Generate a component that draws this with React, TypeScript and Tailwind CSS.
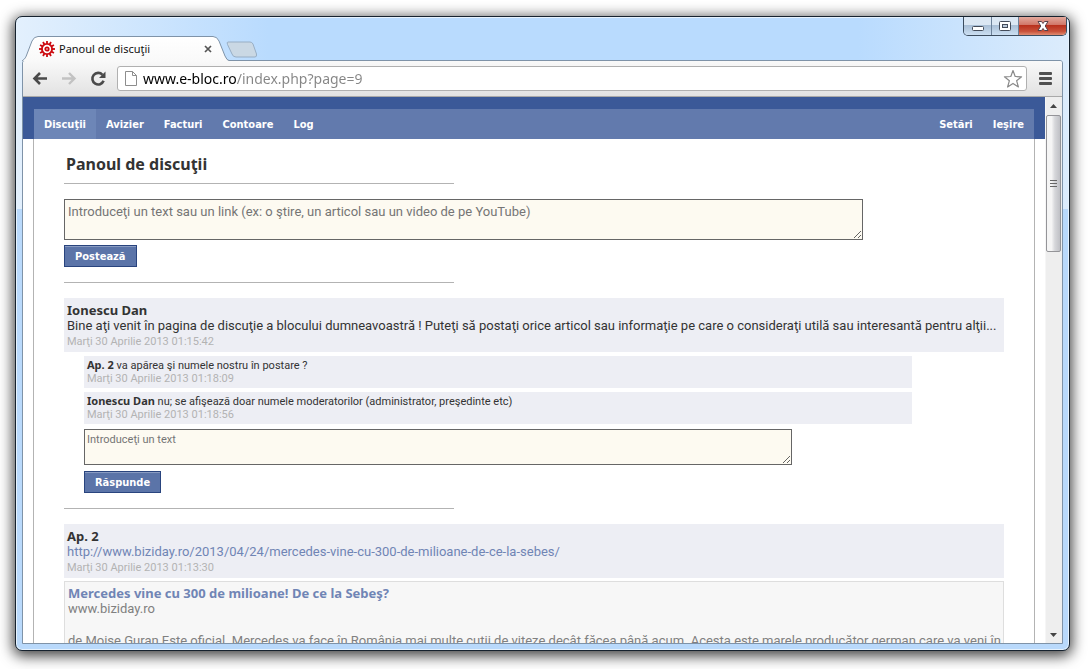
import type { ReactNode } from "react";

const navLinks = ["Discuţii", "Avizier", "Facturi", "Contoare", "Log"];
const accountLinks = ["Setări", "Ieşire"];

const replies = [
  {
    author: "Ap. 2",
    text: "va apărea şi numele nostru în postare ?",
    date: "Marţi 30 Aprilie 2013 01:18:09",
  },
  {
    author: "Ionescu Dan",
    text: "nu; se afişează doar numele moderatorilor (administrator, preşedinte etc)",
    date: "Marţi 30 Aprilie 2013 01:18:56",
  },
];

function GearIcon() {
  const teeth = Array.from({ length: 12 }, (_, i) => i * 30);
  return (
    <svg viewBox="0 0 16 16" className="w-4 h-4 shrink-0">
      {teeth.map((angle) => (
        <rect
          key={angle}
          x="7.1"
          y="0"
          width="1.8"
          height="3"
          fill="#cc0a10"
          transform={`rotate(${angle} 8 8)`}
        />
      ))}
      <circle cx="8" cy="8" r="5.1" fill="#fff" stroke="#cc0a10" strokeWidth="1.900" />
      <circle cx="8" cy="8" r="1.700" fill="#fff" stroke="#cc0a10" strokeWidth="1.800" />
    </svg>
  );
}

function TitleBar() {
  return (
    <header className="relative flex h-[43px] shrink-0 justify-between pl-[6px] pr-[2px]">
      <div className="flex items-end">
        <div className="relative z-10 -mb-px flex h-[25px] w-[207px] items-center pl-[17px] pr-[17px]">
          <svg viewBox="0 0 207 25" className="absolute left-0 top-0 w-[207px] h-[25px]">
            <defs>
              <linearGradient id="tab" x1="0" y1="0" x2="0" y2="1">
                <stop offset="0" stopColor="#ffffff" />
                <stop offset="1" stopColor="#f9f9f9" />
              </linearGradient>
            </defs>
            <path
              d="M0 25 C3 23 4 21 5 18 L10 5 Q12 .5 16 .5 H191 Q195 .5 197 5 L203 20 Q205 24.5 207 24.5 V25 Z"
              fill="url(#tab)"
            />
            <path
              d="M0 25 C3 23 4 21 5 18 L10 5 Q12 .5 16 .5 H191 Q195 .5 197 5 L203 20 Q205 24.5 207 24.5"
              fill="none"
              stroke="#7f93a8"
            />
          </svg>
          <div className="relative flex flex-1 items-center gap-1">
            <GearIcon />
            <span className="flex-1 font-['Noto_Sans',sans-serif] text-[11px] leading-4 text-[#111]">
              Panoul de discuţii
            </span>
            <button aria-label="Închide fila" className="w-2 h-4 flex items-center">
              <svg viewBox="0 0 8 8" className="w-2 h-2">
                <path d="M1 1 7 7M7 1 1 7" stroke="#555" strokeWidth="1.7" />
              </svg>
            </button>
          </div>
        </div>
        <button aria-label="Filă nouă" className="mb-[2px] -ml-[4px]">
          <svg viewBox="0 0 34 17" className="w-[34px] h-[17px]">
            <path
              d="M3 1 H25 Q27 1 28 3 L31.500 13 Q32 16 30 16 H11 Q8 16 7 13 L2.500 3.500 Q1.500 1 3 1Z"
              fill="#cad8e4"
              stroke="#98aec4"
            />
          </svg>
        </button>
      </div>

      <div className="flex h-[19px] w-[104px] overflow-hidden rounded-b-[5px] border border-t-0 border-[#3c4c5e]">
        <button
          aria-label="Minimizează"
          className="flex w-[28px] items-center justify-center border-r border-[#6c8199] bg-[linear-gradient(#dbe7f3_0_45%,#a9bfd6_46%,#cbdff2)]"
        >
          <svg viewBox="0 0 14 14" className="w-[14px] h-[14px]">
            <rect x="1.500" y="7.500" width="11" height="4" rx="1" fill="#fff" stroke="#444c5a" />
          </svg>
        </button>
        <button
          aria-label="Maximizează"
          className="flex w-[27px] items-center justify-center border-r border-[#6c8199] bg-[linear-gradient(#dbe7f3_0_45%,#a9bfd6_46%,#cbdff2)]"
        >
          <svg viewBox="0 0 14 14" className="w-[14px] h-[14px]">
            <rect x="1.500" y="2.500" width="11" height="9" rx="1" fill="#fff" stroke="#444c5a" />
            <rect x="4.500" y="5.500" width="5" height="3" fill="#bccbdc" stroke="#444c5a" />
          </svg>
        </button>
        <button
          aria-label="Închide"
          className="flex flex-1 items-center justify-center bg-[linear-gradient(#e3a99d_0,#d07566_45%,#b8301c_46%,#c9523b_80%,#e08d72)]"
        >
          <svg viewBox="0 0 14 14" className="w-[14px] h-[14px]">
            <path
              d="M2 2.500H5.500L7 4.500 8.500 2.500H12L9.200 7 12 11.500H8.500L7 9.500 5.500 11.500H2L4.800 7Z"
              fill="#fff"
              stroke="#55414a"
            />
          </svg>
        </button>
      </div>
    </header>
  );
}

function Toolbar() {
  return (
    <div className="flex h-[36px] shrink-0 items-center border-b border-[#a9a9a9] bg-[linear-gradient(#f9f9f9,#e2e2e2)] pl-[9px] pr-[10px]">
      <button aria-label="Înapoi" className="mr-[13px]">
        <svg viewBox="0 0 16 16" className="w-4 h-4">
          <path d="M15 7.500H3M8 2 2.500 7.500 8 13" fill="none" stroke="#4a4a4a" strokeWidth="2.600" />
        </svg>
      </button>
      <button aria-label="Înainte" className="mr-[13px]">
        <svg viewBox="0 0 16 16" className="w-4 h-4">
          <path d="M1 7.500H13M8 2 13.500 7.500 8 13" fill="none" stroke="#c2c2c2" strokeWidth="2.400" />
        </svg>
      </button>
      <button aria-label="Reîncarcă" className="mr-[11px]">
        <svg viewBox="0 0 16 16" className="w-4 h-4">
          <path d="M12.500 3.800A5.800 5.800 0 1 0 13.600 9.800" fill="none" stroke="#4a4a4a" strokeWidth="2.600" />
          <path d="M15.500 .5V7H9Z" fill="#4a4a4a" />
        </svg>
      </button>
      <div className="flex h-[25px] flex-1 items-center rounded-[3px] border border-[#b0b0b0] bg-white pl-[7px] pr-[3px]">
        <svg viewBox="0 0 12 15" className="mr-[6px] w-3 h-[15px] shrink-0">
          <path d="M.5 .5H7.500L11.500 4.500V14.500H.5ZM7.500 .5V4.500H11.500" fill="#fff" stroke="#8d8d8d" />
        </svg>
        {/* host name in black, the path in grey */}
        <input
          aria-label="Adresă"
          defaultValue="www.e-bloc.ro/index.php?page=9"
          className="h-[23px] min-w-0 flex-1 bg-[linear-gradient(90deg,#000_94px,#858585_94px)] bg-clip-text font-['Noto_Sans',sans-serif] text-[14px] text-transparent outline-none"
        />
        <button aria-label="Adaugă la favorite">
          <svg viewBox="0 0 20 20" className="w-5 h-5">
            <path
              d="M10 1.500 12.200 7.500 18.600 7.800 13.600 11.700 15.400 18 10 14.400 4.600 18 6.400 11.700 1.400 7.800 7.800 7.500Z"
              fill="#fff"
              stroke="#8a8a8a"
              strokeWidth="1.200"
              strokeLinejoin="round"
            />
          </svg>
        </button>
      </div>
      <button aria-label="Meniu" className="ml-3">
        <svg viewBox="0 0 13 13" className="w-[13px] h-[13px]">
          <rect x="0" y="0" width="13" height="3" rx="1" fill="#505050" />
          <rect x="0" y="5" width="13" height="3" rx="1" fill="#505050" />
          <rect x="0" y="10" width="13" height="3" rx="1" fill="#505050" />
        </svg>
      </button>
    </div>
  );
}

function ScrollBar() {
  return (
    <div className="flex w-[17px] shrink-0 flex-col items-center border-l border-[#f6f6f6] bg-[#eeeeee] pr-px">
      <button aria-label="Sus" className="flex h-[18px] w-full items-center justify-center">
        <svg viewBox="0 0 7 4" className="w-[7px] h-1">
          <path d="M0 4 3.500 0 7 4Z" fill="#444" />
        </svg>
      </button>
      <div className="flex h-[137px] w-[15px] items-center justify-center rounded-[2px] border border-[#949498] bg-[linear-gradient(90deg,#f5f5f5_0_35%,#d6d7da_60%,#bfc0c5)]">
        <svg viewBox="0 0 7 9" className="w-[7px] h-[9px]">
          <path d="M0 1.500H7M0 4.500H7M0 7.500H7" stroke="#666" />
        </svg>
      </div>
      <button aria-label="Jos" className="mt-auto flex h-[17px] w-full items-center justify-center">
        <svg viewBox="0 0 7 4" className="w-[7px] h-1">
          <path d="M0 0 3.500 4 7 0Z" fill="#444" />
        </svg>
      </button>
    </div>
  );
}

function SubmitButton({ children }: { children: ReactNode }) {
  return (
    <button className="flex h-[22px] items-center border border-[#29447e] bg-[#5b74a8] px-[10px] pt-px font-['DejaVu_Sans_Condensed','DejaVu_Sans',sans-serif] text-[11px] leading-4 font-bold text-white shadow-[inset_0_1px_0_#8a9cc2]">
      {children}
    </button>
  );
}

function Rule() {
  return <hr className="w-[390px] border-[#b3b3b3]" />;
}

function PostCard({ author, date, children }: { author: string; date: string; children: ReactNode }) {
  return (
    <div className="bg-[#edeef4] px-[3px] pt-1 pb-[2px] leading-4">
      <div className="font-['Noto_Sans',sans-serif] text-[13px] leading-4 font-bold">{author}</div>
      <div className="text-[13px] leading-4">{children}</div>
      <div className="text-[11px] leading-4 text-[#b3b3b3]">{date}</div>
    </div>
  );
}

function NavBar() {
  return (
    <div className="bg-[#3b5998] px-[11px] pt-3">
      <nav className="flex h-[30px] bg-[#627aad] font-['DejaVu_Sans_Condensed','DejaVu_Sans',sans-serif] text-[11px] font-bold text-white">
        {navLinks.map((label, i) => (
          <a
            key={label}
            href="#"
            className={`flex items-center px-[10px] pt-[2px] ${i === 0 ? "bg-[#6d86b7]" : ""}`}
          >
            {label}
          </a>
        ))}
        <div className="ml-auto flex">
          {accountLinks.map((label) => (
            <a key={label} href="#" className="flex items-center px-[10px] pt-[2px]">
              {label}
            </a>
          ))}
        </div>
      </nav>
    </div>
  );
}

function DiscussionPage() {
  return (
    <div className="min-w-0 flex-1 overflow-hidden bg-white font-['Roboto',sans-serif] text-[#333]">
      <NavBar />
      <main className="mx-[10px] min-h-full border-x border-[#b3b3b3] px-[30px] pt-[14px]">
        <h1 className="mb-2 pl-[2px] font-['Noto_Sans',sans-serif] text-[16px] leading-[22px] font-bold">
          Panoul de discuţii
        </h1>
        <Rule />

        <form className="mt-[15px] mb-[15px]">
          <textarea
            aria-label="Text nou"
            placeholder="Introduceţi un text sau un link (ex: o ştire, un articol sau un video de pe YouTube)"
            className="mb-[5px] block h-[41px] w-[85%] border border-[#666] bg-[#fdfaf1] px-[3px] py-1 text-[13px] leading-4 placeholder:text-[#757575]"
          />
          <SubmitButton>Postează</SubmitButton>
        </form>
        <Rule />

        <article className="mt-[15px] mb-[15px]">
          <PostCard author="Ionescu Dan" date="Marţi 30 Aprilie 2013 01:15:42">
            Bine aţi venit în pagina de discuţie a blocului dumneavoastră ! Puteţi să postaţi orice
            articol sau informaţie pe care o consideraţi utilă sau interesantă pentru alţii...
          </PostCard>
          <div className="ml-5">
            {replies.map((reply) => (
              <div
                key={reply.date}
                className="mt-1 w-[90%] bg-[#edeef4] px-[3px] pt-[3px] pb-[3px] text-[11px] leading-[13px]"
              >
                <p>
                  <b className="font-['Noto_Sans',sans-serif] leading-none">{reply.author}</b>{" "}
                  {reply.text}
                </p>
                <p className="text-[#b3b3b3]">{reply.date}</p>
              </div>
            ))}
            <form className="mt-[5px]">
              <textarea
                aria-label="Răspuns"
                placeholder="Introduceţi un text"
                className="mb-[6px] block h-[36px] w-[77%] border border-[#666] bg-[#fdfaf1] px-[2px] py-[3px] text-[11px] leading-[14px] placeholder:text-[#757575]"
              />
              <SubmitButton>Răspunde</SubmitButton>
            </form>
          </div>
        </article>
        <Rule />

        <article className="mt-[15px]">
          <PostCard author="Ap. 2" date="Marţi 30 Aprilie 2013 01:13:30">
            <a href="#" className="text-[#7085b5]">
              http://www.biziday.ro/2013/04/24/mercedes-vine-cu-300-de-milioane-de-ce-la-sebes/
            </a>
          </PostCard>
          <div className="mt-[3px] border border-[#dedede] bg-[#f7f7f7] px-[3px] pt-[3px] text-[13px] leading-4 text-[#808080]">
            <a href="#" className="block font-['Noto_Sans',sans-serif] font-bold text-[#7085b5]">
              Mercedes vine cu 300 de milioane! De ce la Sebeş?
            </a>
            <p>www.biziday.ro</p>
            <p className="mt-4 whitespace-nowrap">
              de Moise Guran Este oficial. Mercedes va face în România mai multe cutii de viteze decât
              făcea până acum. Acesta este marele producător german care va veni în
            </p>
          </div>
        </article>
      </main>
    </div>
  );
}

export default function App() {
  return (
    <div className="h-screen bg-white pt-4 pr-[18px] pb-[18px] pl-[15px]">
      <div className="flex h-full flex-col rounded-[7px] border border-[#16222e] bg-[#b9d9fb] bg-[linear-gradient(90deg,#e3f0fd_0,#b9dbfe_24%,#b9dbfe_80%,#dcecfc)] bg-[length:100%_192px] bg-no-repeat shadow-[inset_0_0_0_1px_#e6f2fd,0_3px_14px_2px_rgba(0,0,0,0.75)]">
        <TitleBar />
        <div className="mx-[6px] mb-[6px] flex min-h-0 flex-1 flex-col overflow-hidden rounded-t-[3px] border border-[#7f93a8]">
          <Toolbar />
          <div className="flex min-h-0 flex-1">
            <DiscussionPage />
            <ScrollBar />
          </div>
        </div>
      </div>
    </div>
  );
}
